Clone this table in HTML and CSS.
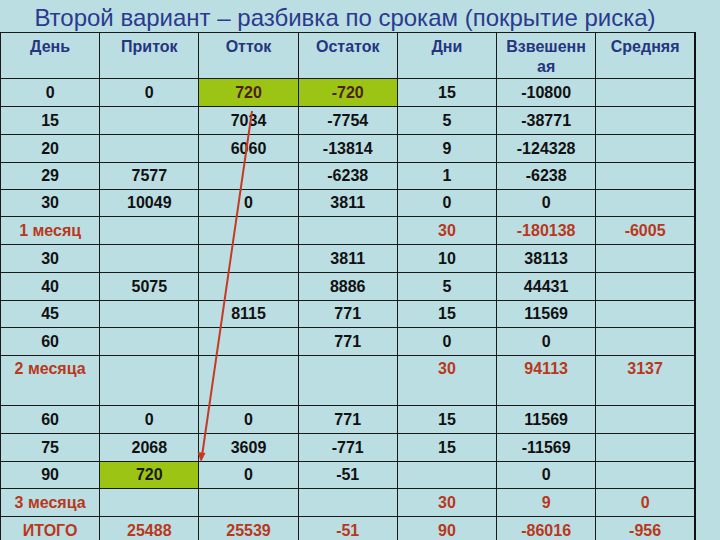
FILE: index.html
```html
<!DOCTYPE html>
<html lang="ru">
<head>
<meta charset="utf-8">
<title>Второй вариант</title>
<link rel="stylesheet" href="styles.css">
</head>
<body>
<div class="slide">
  <h1 class="title">Второй вариант – разбивка по срокам (покрытие риска)</h1>
  <div class="table-wrap">
    <table class="grid">
      <colgroup>
        <col class="c"><col class="c"><col class="c"><col class="c"><col class="c"><col class="c"><col class="c">
      </colgroup>
      <thead>
        <tr class="head">
          <th>День</th><th>Приток</th><th>Отток</th><th>Остаток</th><th>Дни</th><th>Взвешенн ая</th><th>Средняя</th>
        </tr>
      </thead>
      <tbody>
        <tr><td>0</td><td>0</td><td class="green">720</td><td class="green">-720</td><td>15</td><td>-10800</td><td></td></tr>
        <tr><td>15</td><td></td><td>7034</td><td>-7754</td><td>5</td><td>-38771</td><td></td></tr>
        <tr><td>20</td><td></td><td>6060</td><td>-13814</td><td>9</td><td>-124328</td><td></td></tr>
        <tr class="r27"><td>29</td><td>7577</td><td></td><td>-6238</td><td>1</td><td>-6238</td><td></td></tr>
        <tr class="r27"><td>30</td><td>10049</td><td>0</td><td>3811</td><td>0</td><td>0</td><td></td></tr>
        <tr class="sum"><td>1 месяц</td><td></td><td></td><td></td><td>30</td><td>-180138</td><td>-6005</td></tr>
        <tr><td>30</td><td></td><td></td><td>3811</td><td>10</td><td>38113</td><td></td></tr>
        <tr><td>40</td><td>5075</td><td></td><td>8886</td><td>5</td><td>44431</td><td></td></tr>
        <tr class="r27"><td>45</td><td></td><td>8115</td><td>771</td><td>15</td><td>11569</td><td></td></tr>
        <tr><td>60</td><td></td><td></td><td>771</td><td>0</td><td>0</td><td></td></tr>
        <tr class="sum tall"><td>2 месяца</td><td></td><td></td><td></td><td>30</td><td>94113</td><td>3137</td></tr>
        <tr><td>60</td><td>0</td><td>0</td><td>771</td><td>15</td><td>11569</td><td></td></tr>
        <tr><td>75</td><td>2068</td><td>3609</td><td>-771</td><td>15</td><td>-11569</td><td></td></tr>
        <tr class="r27"><td>90</td><td class="green plain">720</td><td>0</td><td>-51</td><td></td><td>0</td><td></td></tr>
        <tr class="sum"><td>3 месяца</td><td></td><td></td><td></td><td>30</td><td>9</td><td>0</td></tr>
        <tr class="sum"><td>ИТОГО</td><td>25488</td><td>25539</td><td>-51</td><td>90</td><td>-86016</td><td>-956</td></tr>
      </tbody>
    </table>
    <svg class="arrow" width="696" height="508" viewBox="0 0 696 508">
      <line x1="252" y1="79" x2="202" y2="424" stroke="#c63a24" stroke-width="2"/>
      <polygon points="201,430 197.5,420 205.5,421" fill="#c63a24"/>
    </svg>
  </div>
</div>
</body>
</html>
```

FILE: styles.css
```css
html, body {
  margin: 0;
  padding: 0;
}
body {
  background: #bbdee2;
  width: 720px;
  height: 540px;
  overflow: hidden;
  font-family: "Liberation Sans", Arial, sans-serif;
}
.slide {
  width: 720px;
}
.title {
  margin: 0;
  width: 690px;
  height: 32px;
  text-align: center;
  font-weight: normal;
  font-size: 24px;
  line-height: 36px;
  color: #2b3a8e;
  white-space: nowrap;
}
.table-wrap {
  position: relative;
  width: 696px;
}
.grid {
  border-collapse: collapse;
  table-layout: fixed;
  width: 696px;
  border-right: 2px solid #111;
}
.c {
  width: 99px;
}
.grid th, .grid td {
  border: 1px solid #1a1a1a;
  padding: 0 2px;
  text-align: center;
  font-weight: bold;
  font-size: 16px;
  color: #111;
}
.grid td {
  height: 27px;
  vertical-align: middle;
}
.grid tr.r27 td {
  height: 26px;
}
.head th {
  height: 46px;
  vertical-align: top;
  color: #26357f;
  font-size: 16px;
  line-height: 20px;
  padding-top: 4px;
  box-sizing: border-box;
}
.green {
  background: #9cc414;
  color: #4e2010 !important;
}
.green.plain {
  color: #1a1a1a !important;
}
.sum td {
  color: #b9381c;
}
.tall td {
  height: 50px;
  vertical-align: top;
  padding-top: 4px;
  box-sizing: border-box;
}
.arrow {
  position: absolute;
  left: 0;
  top: 0;
  pointer-events: none;
}
```
